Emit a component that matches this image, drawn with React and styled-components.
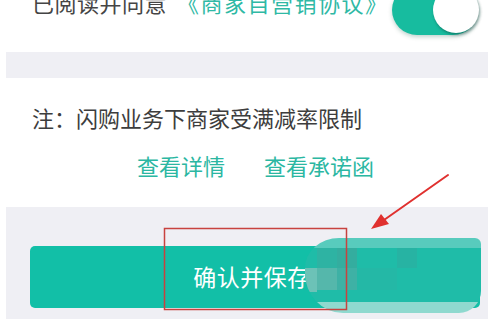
import React from "react";
import styled, { createGlobalStyle } from "styled-components";

const Global = createGlobalStyle`
  html, body { margin: 0; padding: 0; background: #ffffff; overflow: hidden; }
  body { font-family: "Noto Sans CJK SC", "Noto Sans", sans-serif; }
`;

const Page = styled.div`
  position: relative;
  display: flex;
  flex-direction: column;
  width: 482px;
  height: 319px;
  margin-left: 6px;
  background: #ffffff;
`;

const TopSection = styled.section`
  display: flex;
  flex-direction: column;
  flex: none;
  height: 52px;
  background: #ffffff;
  margin-left: -6px;
`;

const AgreeRow = styled.div`
  display: flex;
  align-items: center;
  height: 52px;
  margin-top: -16px;
  padding: 0 10px 0 32px;
`;

const AgreeText = styled.span`
  font-size: 22px;
  line-height: 30px;
  letter-spacing: 0.5px;
  color: #454545;
  margin-bottom: 16px;
  white-space: nowrap;
`;

const AgreeLink = styled.span`
  font-size: 22px;
  line-height: 30px;
  letter-spacing: 1.5px;
  color: #2fb9a5;
  margin-left: 10px;
  margin-bottom: 16px;
  white-space: nowrap;
`;

const Toggle = styled.div`
  position: relative;
  margin-left: auto;
  width: 86px;
  height: 50px;
  border-radius: 25px;
  background: #17bc9f;
  box-shadow: 0 2px 4px rgba(0, 80, 60, 0.25);
`;

const Knob = styled.div`
  position: absolute;
  right: -1px;
  top: 2px;
  width: 46px;
  height: 46px;
  border-radius: 50%;
  background: #ffffff;
  box-shadow: 1px 2px 3px rgba(0, 60, 50, 0.45);
`;

const Divider = styled.div`
  flex: none;
  height: 26px;
  background: #efeff4;
`;

const InfoSection = styled.section`
  flex: none;
  height: 129px;
  background: #ffffff;
  padding-top: 24px;
  box-sizing: border-box;
`;

const Note = styled.p`
  margin: 0;
  padding-left: 26px;
  font-size: 22px;
  line-height: 30px;
  color: #3d3d3d;
  white-space: nowrap;
`;

const Links = styled.div`
  display: flex;
  gap: 39px;
  padding-left: 131px;
  margin-top: 18px;
`;

const LinkText = styled.span`
  font-size: 22px;
  line-height: 30px;
  color: #2bb7a2;
  white-space: nowrap;
`;

const Footer = styled.section`
  flex: none;
  height: 112px;
  background: #efeff4;
  padding: 39px 8px 0 24px;
  box-sizing: border-box;
`;

const SaveButton = styled.button`
  display: flex;
  align-items: center;
  justify-content: center;
  width: 100%;
  height: 62px;
  border: none;
  border-radius: 5px;
  background: #12bfa7;
  color: #ffffff;
  font-family: "Noto Sans CJK SC", sans-serif;
  font-size: 23px;
  letter-spacing: 0.5px;
  padding: 0 0 2px 0;
  text-indent: -6px;
`;

const Blur = styled.div`
  position: absolute;
  left: 299px;
  top: 238px;
  width: 176px;
  height: 75px;
  border-radius: 34px 6px 22px 38px / 30px 6px 22px 40px;
  background: linear-gradient(
    to bottom,
    #58cbbd 0px,
    #58cbbd 10px,
    #1fbca8 10px,
    #1fbca8 64px,
    #8fd9cf 64px
  );
  filter: blur(0.6px);
  overflow: hidden;
`;

const Tile = styled.div`
  position: absolute;
  background: ${(p) => p.$c};
`;

const Overlay = styled.svg`
  position: absolute;
  left: -6px;
  top: 0;
  pointer-events: none;
`;

export default function App() {
  const tiles = [
    { l: 12, t: 10, w: 20, h: 20, c: "#2eb3a3" },
    { l: 32, t: 10, w: 20, h: 20, c: "#34ad9f" },
    { l: 12, t: 30, w: 20, h: 22, c: "#55b7ab" },
    { l: 32, t: 30, w: 20, h: 22, c: "#3eb1a5" },
    { l: 0, t: 30, w: 12, h: 24, c: "#6cc2b7" },
    { l: 92, t: 10, w: 20, h: 20, c: "#27b3a3" },
    { l: 52, t: 30, w: 40, h: 22, c: "#24b8a6" },
  ];
  return (
    <>
      <Global />
      <Page>
        <TopSection>
          <AgreeRow>
            <AgreeText>已阅读并同意</AgreeText>
            <AgreeLink>《商家自营销协议》</AgreeLink>
            <Toggle>
              <Knob />
            </Toggle>
          </AgreeRow>
        </TopSection>
        <Divider />
        <InfoSection>
          <Note>注：闪购业务下商家受满减率限制</Note>
          <Links>
            <LinkText>查看详情</LinkText>
            <LinkText>查看承诺函</LinkText>
          </Links>
        </InfoSection>
        <Footer>
          <SaveButton>确认并保存</SaveButton>
        </Footer>
        <Blur>
          {tiles.map((t, i) => (
            <Tile
              key={i}
              $c={t.c}
              style={{ left: t.l, top: t.t, width: t.w, height: t.h }}
            />
          ))}
        </Blur>
        <Overlay width="488" height="319" viewBox="0 0 488 319">
          <rect
            x="164.5"
            y="228.5"
            width="182"
            height="81"
            fill="none"
            stroke="#c8423f"
            strokeWidth="1.5"
          />
          <line
            x1="448"
            y1="175"
            x2="384"
            y2="220"
            stroke="#e0312f"
            strokeWidth="2"
            strokeLinecap="round"
          />
          <polygon points="371,229 381,214 389,224" fill="#e0312f" />
        </Overlay>
      </Page>
    </>
  );
}
